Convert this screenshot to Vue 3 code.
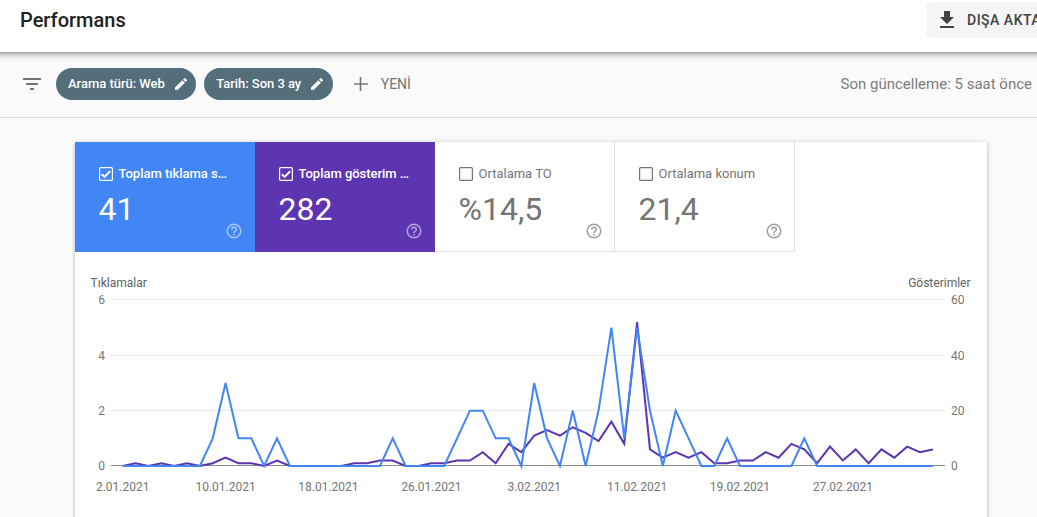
<script setup>
const metrics = [
  { label: 'Toplam tıklama s…', value: '41', tone: 'blue', on: true },
  { label: 'Toplam gösterim …', value: '282', tone: 'purple', on: true },
  { label: 'Ortalama TO', value: '%14,5', tone: 'plain', on: false },
  { label: 'Ortalama konum', value: '21,4', tone: 'plain', on: false },
]
const chips = ['Arama türü: Web', 'Tarih: Son 3 ay']

const clicks = [
  0, 0, 0, 0, 0, 0, 0, 1, 3, 1, 1, 0, 1, 0, 0, 0, 0, 0, 0, 0, 0, 1, 0, 0, 0, 0, 1, 2, 2, 1, 1, 0,
  3, 1, 0, 2, 0, 2, 5, 1, 5, 2, 0, 2, 1, 0, 0, 1, 0, 0, 0, 0, 0, 1, 0, 0, 0, 0, 0, 0, 0, 0, 0, 0,
]
const impressions = [
  0, 1, 0, 1, 0, 1, 0, 1, 3, 1, 1, 0, 2, 0, 0, 0, 0, 0, 1, 1, 2, 2, 0, 0, 1, 1, 2, 2, 5, 1, 8, 5,
  11, 13, 11, 14, 12, 9, 16, 8, 52, 6, 3, 5, 3, 5, 1, 1, 2, 2, 5, 3, 8, 6, 1, 7, 2, 6, 1, 6, 3, 7, 5, 6,
]
const x0 = 47.7
const step = 12.86
const path = (values, unit) =>
  values.map((v, i) => `${(x0 + i * step).toFixed(2)},${(214 - v * unit).toFixed(2)}`).join(' ')
const clickPoints = path(clicks, 27.67)
const impressionPoints = path(impressions, 2.767)

const rows = [
  { y: 47.5, left: '6', right: '60' },
  { y: 103.5, left: '4', right: '40' },
  { y: 158.5, left: '2', right: '20' },
  { y: 213.5, left: '0', right: '0' },
]
const dates = ['2.01.2021', '10.01.2021', '18.01.2021', '26.01.2021', '3.02.2021', '11.02.2021', '19.02.2021', '27.02.2021']
</script>

<template>
  <div class="page">
    <header class="top">
      <h1>Performans</h1>
      <button class="export">
        <svg width="24" height="24" viewBox="0 0 24 24"><path d="M19 9h-4V3H9v6H5l7 7 7-7zM5 18v2h14v-2H5z" /></svg>
        <span>DIŞA AKTAR</span>
      </button>
    </header>

    <div class="filters">
      <svg class="filter-icon" width="24" height="24" viewBox="0 0 24 24"><path d="M10 18h4v-2h-4v2zM3 6v2h18V6H3zm3 7h12v-2H6v2z" /></svg>
      <div v-for="chip in chips" :key="chip" class="chip">
        <span>{{ chip }}</span>
        <svg width="16" height="16" viewBox="0 0 24 24"><path d="M3 17.25V21h3.75L17.81 9.94l-3.75-3.75L3 17.25zM20.71 7.04a1 1 0 0 0 0-1.41l-2.34-2.34a1 1 0 0 0-1.41 0l-1.83 1.83 3.75 3.75 1.83-1.83z" /></svg>
      </div>
      <div class="new">
        <svg width="16" height="16" viewBox="0 0 16 16"><path d="M7.5 1v14M1 8h14" /></svg>
        <span>YENİ</span>
      </div>
      <span class="updated">Son güncelleme: 5 saat önce</span>
    </div>

    <main class="card">
      <div class="metrics">
        <div v-for="m in metrics" :key="m.label" class="metric" :class="m.tone">
          <div class="label">
            <svg class="box" width="14" height="14" viewBox="0 0 14 14">
              <rect x=".6" y=".6" width="12.8" height="12.8" rx="1" />
              <path v-if="m.on" class="tick" d="M2.8 7.2l2.8 2.7 5.5-5.7" />
            </svg>
            <span>{{ m.label }}</span>
          </div>
          <div class="value">{{ m.value }}</div>
          <svg class="help" width="18" height="18" viewBox="0 0 24 24"><path d="M11 18h2v-2h-2v2zm1-16a10 10 0 1 0 0 20 10 10 0 0 0 0-20zm0 18a8 8 0 1 1 0-16 8 8 0 0 1 0 16zm0-14a4 4 0 0 0-4 4h2a2 2 0 1 1 4 0c0 2-3 1.75-3 5h2c0-2.25 3-2.5 3-5a4 4 0 0 0-4-4z" /></svg>
        </div>
      </div>

      <svg class="chart" width="912" height="265" viewBox="0 0 912 265">
        <text class="title" x="15.6" y="35">Tıklamalar</text>
        <text class="title" x="895.5" y="35" text-anchor="end">Gösterimler</text>
        <g v-for="(r, i) in rows" :key="r.y">
          <line :class="i === 3 ? 'axis' : 'grid'" x1="36" x2="870" :y1="r.y" :y2="r.y" />
          <text x="30" :y="r.y + 4.5" text-anchor="end">{{ r.left }}</text>
          <text x="876" :y="r.y + 4.5">{{ r.right }}</text>
        </g>
        <polyline class="impressions" :points="impressionPoints" />
        <polyline class="clicks" :points="clickPoints" />
        <text v-for="(d, i) in dates" :key="d" :x="x0 + i * step * 8" y="239" text-anchor="middle">{{ d }}</text>
      </svg>
    </main>
  </div>
</template>

<style>
html,
body {
  overflow: hidden;
  background: #fafafa;
}
</style>

<style scoped>
.page {
  width: 1037px;
  height: 517px;
  overflow: hidden;
  background: #fafafa;
  font-family: Roboto, "Liberation Sans", sans-serif;
  color: #757575;
}
.top {
  position: relative;
  display: flex;
  justify-content: space-between;
  align-items: flex-start;
  box-sizing: border-box;
  height: 52px;
  margin: 0 -20px;
  padding: 2px 20px 0 40px;
  background: #fff;
  box-shadow: 0 0 4px rgba(0, 0, 0, 0.28), 0 3px 6px rgba(0, 0, 0, 0.28);
}
h1 {
  margin: 0;
  font-size: 20px;
  line-height: 36px;
  font-weight: 500;
  color: #212121;
}
.export {
  display: flex;
  flex: none;
  align-items: center;
  gap: 8px;
  width: 130px;
  height: 36px;
  margin-right: -20px;
  padding: 0 8px;
  border: 0;
  border-radius: 2px;
  background: #f5f5f5;
  font: 500 14px/36px Roboto, sans-serif;
  letter-spacing: 0.5px;
  color: #424242;
  white-space: nowrap;
}
.export svg {
  flex: none;
  fill: #424242;
}
.filters {
  display: flex;
  align-items: center;
  box-sizing: border-box;
  height: 66px;
  padding: 0 5px 2px 20px;
  border-bottom: 1px solid #dcdcdc;
}
.filter-icon {
  margin-right: 12px;
  fill: #757575;
}
.chip {
  display: flex;
  align-items: center;
  gap: 8px;
  height: 32px;
  margin-right: 8px;
  padding: 0 7.5px 0 12px;
  border-radius: 16px;
  background: #546e7a;
  color: #fff;
  font-size: 13px;
  font-weight: 500;
  letter-spacing: -0.03px;
  white-space: nowrap;
}
.chip svg {
  fill: #fff;
}
.new {
  display: flex;
  align-items: center;
  gap: 12px;
  margin-left: 12px;
  font-size: 14px;
}
.new path {
  stroke: #757575;
  stroke-width: 1.6;
}
.updated {
  margin-left: auto;
  font-size: 15px;
  color: #7d7d7d;
}
.card {
  width: 912px;
  height: 400px;
  margin: 24px 0 0 75px;
  border-radius: 2px;
  background: #fff;
  box-shadow: 0 1px 4px rgba(0, 0, 0, 0.3);
}
.metrics {
  display: flex;
  height: 110px;
}
.metric {
  position: relative;
  box-sizing: border-box;
  width: 180px;
  height: 110px;
  padding: 21px 0 0 24px;
}
.label {
  display: flex;
  align-items: center;
  gap: 5.5px;
  height: 20px;
  font-size: 13px;
  white-space: nowrap;
}
.box {
  flex: none;
  margin-top: 2px;
  fill: none;
  stroke: #757575;
  stroke-width: 1.2;
}
.box .tick {
  stroke-width: 2;
}
.value {
  margin: 6px 0 0 -0.5px;
  font-size: 32px;
  line-height: 40px;
}
.help {
  position: absolute;
  right: 12.5px;
  bottom: 12px;
  fill: #9e9e9e;
}
.blue {
  background: #4285f4;
}
.purple {
  background: #5e35b1;
}
.blue,
.purple {
  color: #fff;
}
.blue .label,
.purple .label {
  font-weight: 500;
  letter-spacing: -0.03px;
}
.blue .box,
.purple .box {
  stroke: #fff;
}
.blue .help,
.purple .help {
  fill: rgba(255, 255, 255, 0.54);
}
.plain {
  border-right: 1px solid #e0e0e0;
  border-bottom: 1px solid #e0e0e0;
}
.plain .help {
  right: 11.5px;
  bottom: 11px;
}
.chart {
  display: block;
}
.chart text {
  fill: #757575;
  font-size: 12px;
}
.chart .title {
  fill: #616161;
}
.grid {
  stroke: #ebebeb;
}
.axis {
  stroke: #8a8a8a;
}
polyline {
  fill: none;
  stroke-width: 2;
}
.clicks {
  stroke: #4285f4;
}
.impressions {
  stroke: #5e35b1;
}
</style>
